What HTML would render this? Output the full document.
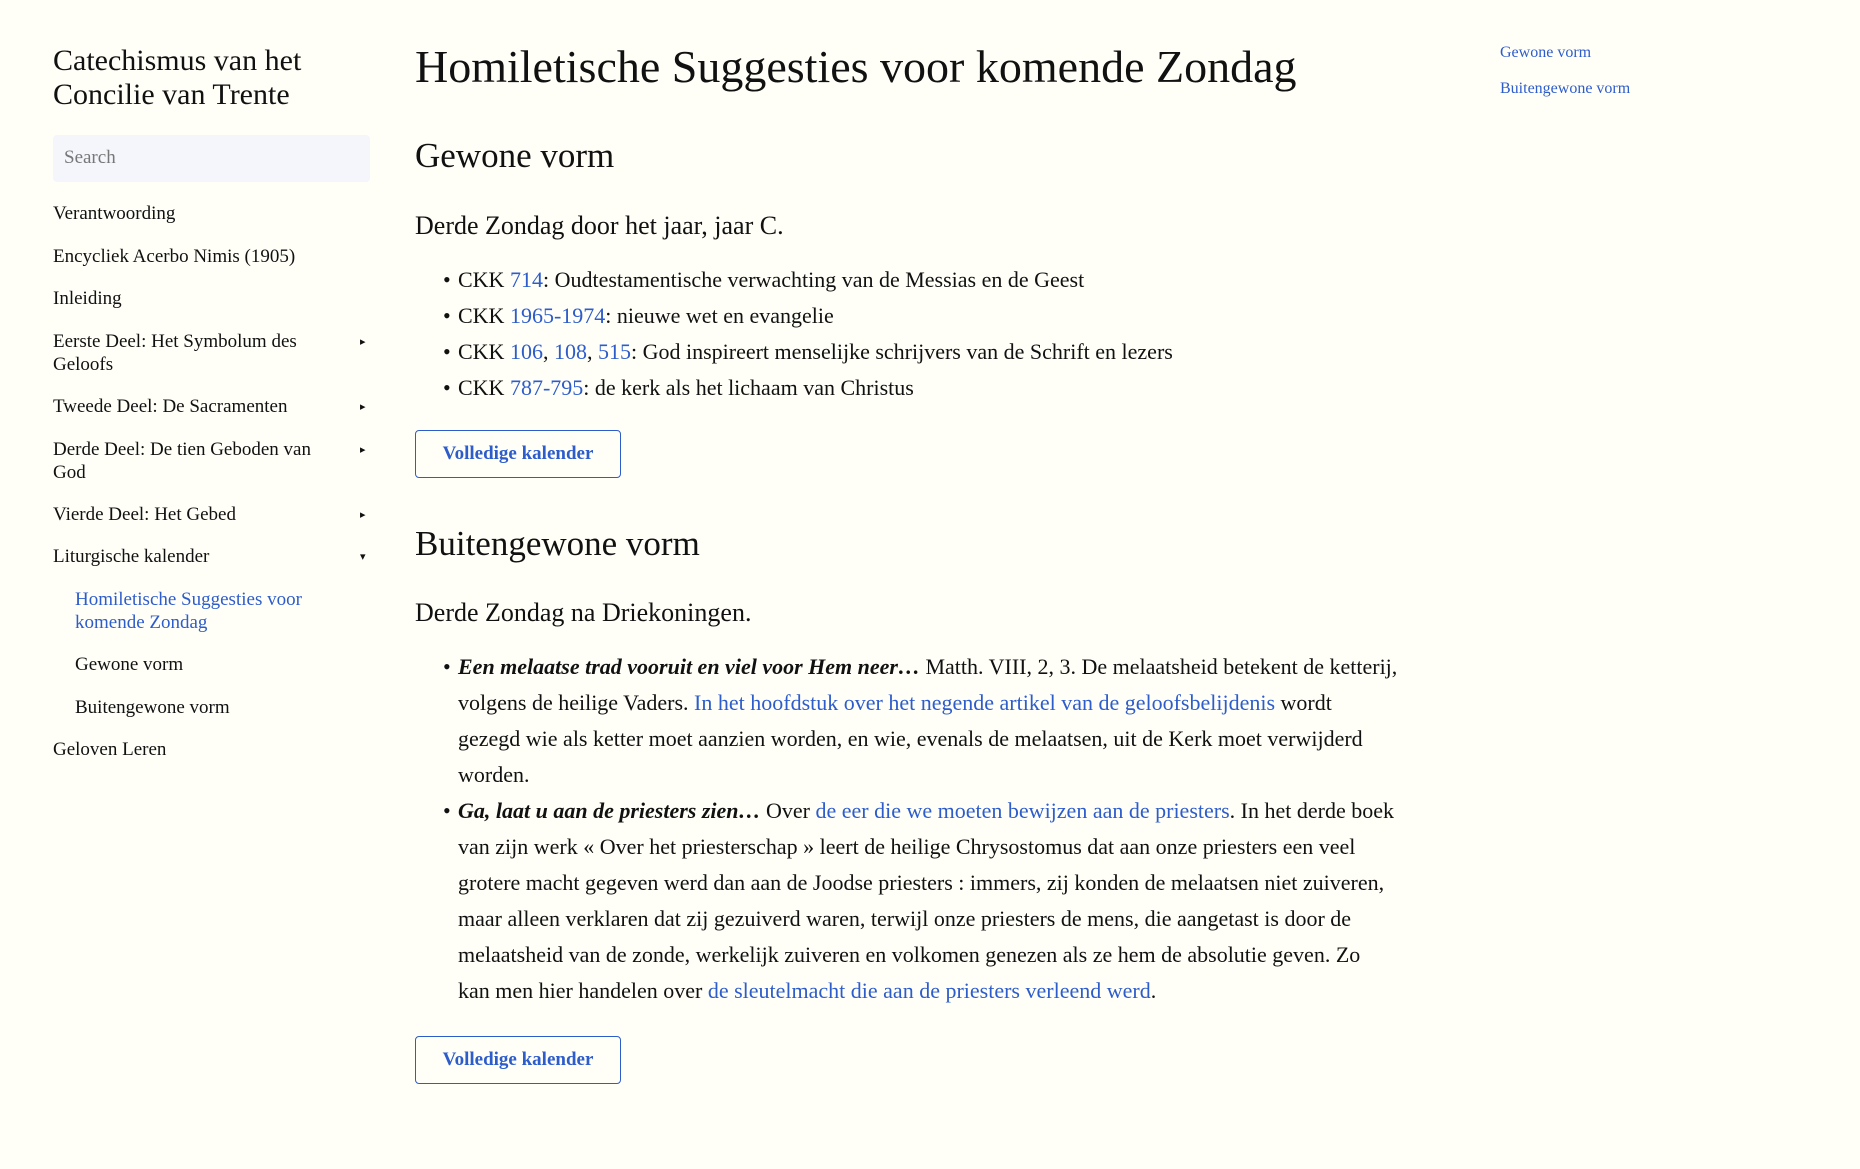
<!DOCTYPE html>
<html><head><meta charset="utf-8"><style>
*{margin:0;padding:0;box-sizing:border-box}
body{width:1860px;height:1169px;background:#fffff8;font-family:"Liberation Serif",serif;color:#111;position:relative;overflow:hidden}
a{color:#2d5ccb;text-decoration:none}
.abs{position:absolute;white-space:nowrap}
.title{left:53px;top:44px;font-size:30px;line-height:34px}
.search{left:53px;top:135px;width:317px;height:47px;background:#f4f6fb;border-radius:4px;font-size:19px;color:#777;padding:12px 11px}
.nav{font-size:19px;line-height:23px}
.arr{font-size:11px;position:absolute;left:360px}
h1{position:absolute;left:415px;top:40px;font-size:46px;font-weight:normal;white-space:nowrap}
h2{position:absolute;left:415px;font-size:35px;font-weight:normal}
.sub{position:absolute;left:415px;font-size:26px}
ul{position:absolute;left:458px;list-style:none;font-size:22px;line-height:36px;white-space:nowrap}
li{position:relative}
li:before{content:"•";position:absolute;left:-15px}
.btn{position:absolute;left:415px;width:206px;height:48px;border:1.5px solid #2d5ccb;border-radius:4px;color:#2d5ccb;font-weight:bold;font-size:19px;text-align:center;line-height:45px}
.toc{left:1500px;font-size:16px}
</style></head><body>
<div class="abs title">Catechismus van het<br>Concilie van Trente</div>
<div class="abs search">Search</div>
<div class="abs nav" style="left:53px;top:202px">Verantwoording</div>
<div class="abs nav" style="left:53px;top:245px">Encycliek Acerbo Nimis (1905)</div>
<div class="abs nav" style="left:53px;top:287px">Inleiding</div>
<div class="abs nav" style="left:53px;top:330px">Eerste Deel: Het Symbolum des<br>Geloofs</div><span class="arr" style="top:335px">▸</span>
<div class="abs nav" style="left:53px;top:395px">Tweede Deel: De Sacramenten</div><span class="arr" style="top:400px">▸</span>
<div class="abs nav" style="left:53px;top:438px">Derde Deel: De tien Geboden van<br>God</div><span class="arr" style="top:443px">▸</span>
<div class="abs nav" style="left:53px;top:503px">Vierde Deel: Het Gebed</div><span class="arr" style="top:508px">▸</span>
<div class="abs nav" style="left:53px;top:545px">Liturgische kalender</div><span class="arr" style="top:550px">▾</span>
<div class="abs nav" style="left:75px;top:588px"><a>Homiletische Suggesties voor<br>komende Zondag</a></div>
<div class="abs nav" style="left:75px;top:653px">Gewone vorm</div>
<div class="abs nav" style="left:75px;top:696px">Buitengewone vorm</div>
<div class="abs nav" style="left:53px;top:738px">Geloven Leren</div>

<h1>Homiletische Suggesties voor komende Zondag</h1>
<h2 style="top:136px">Gewone vorm</h2>
<div class="sub" style="top:211px">Derde Zondag door het jaar, jaar C.</div>
<ul style="top:262px">
<li>CKK <a>714</a>: Oudtestamentische verwachting van de Messias en de Geest</li>
<li>CKK <a>1965-1974</a>: nieuwe wet en evangelie</li>
<li>CKK <a>106</a>, <a>108</a>, <a>515</a>: God inspireert menselijke schrijvers van de Schrift en lezers</li>
<li>CKK <a>787-795</a>: de kerk als het lichaam van Christus</li>
</ul>
<div class="btn" style="top:430px">Volledige kalender</div>
<h2 style="top:524px">Buitengewone vorm</h2>
<div class="sub" style="top:598px">Derde Zondag na Driekoningen.</div>
<ul style="top:649px">
<li><b><i>Een melaatse trad vooruit en viel voor Hem neer…</i></b> Matth. VIII, 2, 3. De melaatsheid betekent de ketterij,<br>volgens de heilige Vaders. <a>In het hoofdstuk over het negende artikel van de geloofsbelijdenis</a> wordt<br>gezegd wie als ketter moet aanzien worden, en wie, evenals de melaatsen, uit de Kerk moet verwijderd<br>worden.</li>
<li><b><i>Ga, laat u aan de priesters zien…</i></b> Over <a>de eer die we moeten bewijzen aan de priesters</a>. In het derde boek<br>van zijn werk « Over het priesterschap » leert de heilige Chrysostomus dat aan onze priesters een veel<br>grotere macht gegeven werd dan aan de Joodse priesters : immers, zij konden de melaatsen niet zuiveren,<br>maar alleen verklaren dat zij gezuiverd waren, terwijl onze priesters de mens, die aangetast is door de<br>melaatsheid van de zonde, werkelijk zuiveren en volkomen genezen als ze hem de absolutie geven. Zo<br>kan men hier handelen over <a>de sleutelmacht die aan de priesters verleend werd</a>.</li>
</ul>
<div class="btn" style="top:1036px">Volledige kalender</div>

<div class="abs toc" style="top:44px;left:1500px"><a>Gewone vorm</a></div>
<div class="abs toc" style="top:80px;left:1500px"><a>Buitengewone vorm</a></div>
</body></html>
